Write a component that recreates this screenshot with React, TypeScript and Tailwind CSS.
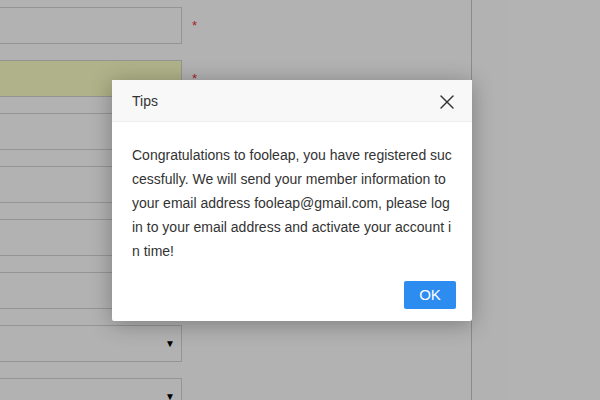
import { X } from "lucide-react";

const fields = [
  { kind: "input", required: true },
  { kind: "filled", required: true },
  { kind: "input", required: false },
  { kind: "input", required: false },
  { kind: "input", required: false },
  { kind: "input", required: false },
  { kind: "select", required: false },
  { kind: "select", required: false },
];

export default function App() {
  return (
    <div
      className="relative h-[400px] w-[600px] overflow-hidden bg-white text-[14px] text-[#333]"
      style={{ fontFamily: '"Liberation Sans", Arial, sans-serif' }}
    >
      <div className="flex h-full">
        <div className="flex w-[471px] flex-col gap-[16px] pt-[7px]">
          {fields.map((field, i) => (
            <div key={i} className="flex items-center">
              <div
                className={`flex h-[37px] w-[182px] shrink-0 items-center justify-end border border-l-0 border-[#d4d4d4] pr-[6px] ${
                  field.kind === "filled" ? "bg-[#fdffc5]" : "bg-white"
                }`}
              >
                {field.kind === "select" ? (
                  <span className="text-[10px] leading-none text-black">▼</span>
                ) : null}
              </div>
              {field.required ? (
                <span className="ml-[10px] text-[13px] text-[#e8303a]">*</span>
              ) : null}
            </div>
          ))}
        </div>
        <div className="h-full flex-1 border-l border-[#c8c8c8]" />
      </div>

      <div className="absolute inset-0 bg-black/30" />

      <div className="absolute left-[112px] top-[80px] w-[360px] rounded-[2px] bg-white shadow-[0_3px_22px_rgba(0,0,0,0.3)]">
        <div className="flex h-[42px] items-center justify-between border-b border-[#eee] bg-[#f8f8f8] pl-[20px] pr-[13px] pt-[2px]">
          <span className="text-[14px] text-[#333]">Tips</span>
          <X size={24} strokeWidth={1.4} className="text-[#333]" />
        </div>
        <div className="px-[20px] pb-[18px] pt-[21px]">
          <p className="break-all text-[14px] leading-[24px] text-[#333]">
            Congratulations to fooleap, you have registered successfully. We will send your member
            information to your email address fooleap@gmail.com, please log in to your email
            address and activate your account in time!
          </p>
        </div>
        <div className="flex justify-end pb-[12px] pr-[16px]">
          <button className="h-[28px] w-[52px] rounded-[2px] bg-[#2d8cf0] text-[15px] text-white">
            OK
          </button>
        </div>
      </div>
    </div>
  );
}
